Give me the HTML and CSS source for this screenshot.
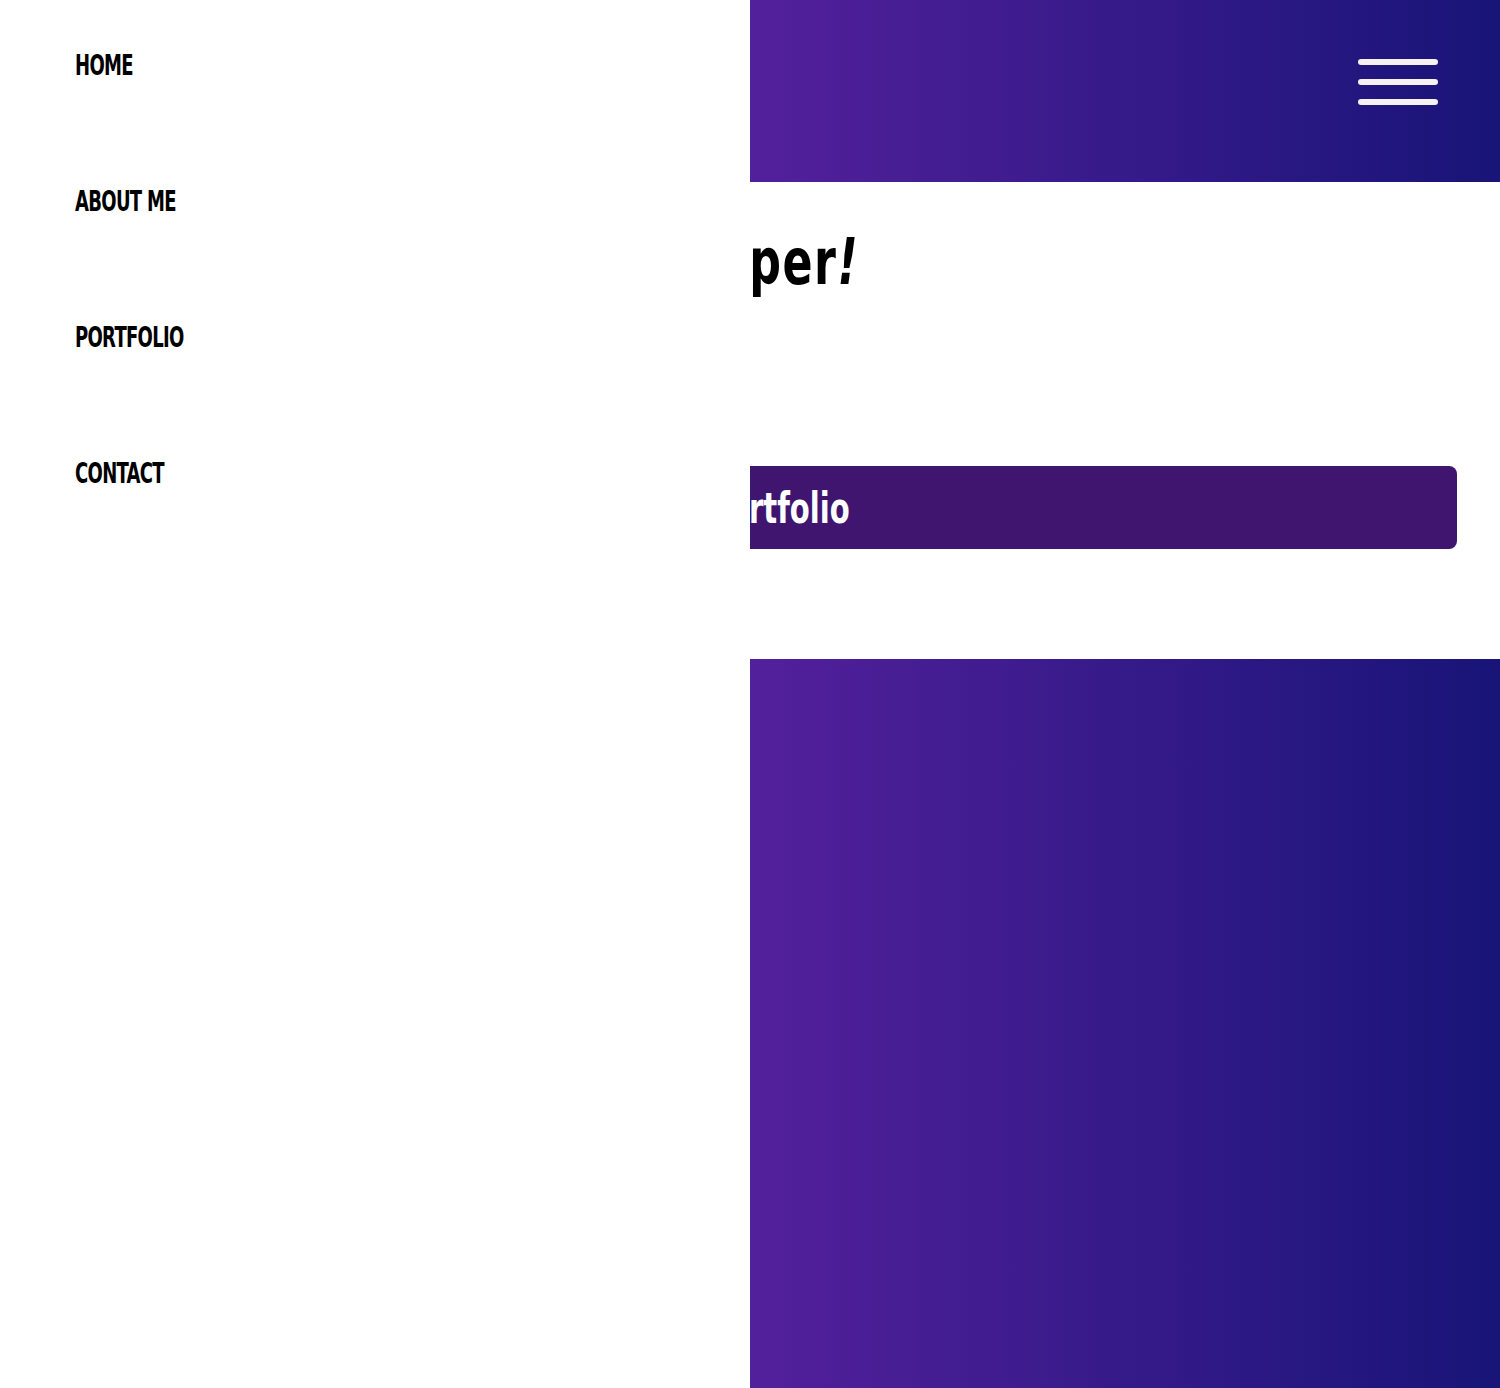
FILE: index.html
```html
<!DOCTYPE html>
<html lang="en">
<head>
<meta charset="utf-8">
<title>Portfolio</title>
<link rel="stylesheet" href="styles.css">
</head>
<body>
<div class="page">
  <header class="topbar">
    <button class="burger" aria-label="Menu">
      <span class="bar"></span><span class="bar"></span><span class="bar"></span>
    </button>
  </header>
  <section class="hero">
    <h1 class="hero-title"><span class="squeeze">Hi, I'm a web develo<span class="tail">per<em class="bang">!</em></span></span></h1>
    <a class="cta" href="#"><span class="squeeze">View my portfolio</span></a>
  </section>
  <section class="band"></section>
</div>
<nav class="menu">
  <a class="menu-link" href="#"><span class="squeeze-nav">HOME</span></a>
  <a class="menu-link" href="#"><span class="squeeze-nav">ABOUT ME</span></a>
  <a class="menu-link" href="#"><span class="squeeze-nav">PORTFOLIO</span></a>
  <a class="menu-link" href="#"><span class="squeeze-nav">CONTACT</span></a>
</nav>
</body>
</html>
```
FILE: styles.css
```css
html, body {
  margin: 0;
  padding: 0;
  height: 100%;
}
body {
  font-family: "DejaVu Sans Condensed", "DejaVu Sans", sans-serif;
  background: #ffffff;
  overflow: hidden;
}
.page {
  width: 1500px;
  min-height: 1388px;
  display: flex;
  flex-direction: column;
}
.topbar {
  height: 182px;
  background: linear-gradient(to right, #7a2bc0 0%, #53209b 50%, #181478 100%);
  display: flex;
  justify-content: flex-end;
  align-items: flex-start;
  padding: 59px 62px 0 0;
  box-sizing: border-box;
}
.burger {
  background: none;
  border: 0;
  padding: 0;
  display: flex;
  flex-direction: column;
  gap: 14px;
  cursor: pointer;
}
.bar {
  display: block;
  width: 80px;
  height: 6px;
  border-radius: 3px;
  background: #f6f2f2;
}
.hero {
  height: 477px;
  box-sizing: border-box;
  padding: 30px 43px 0 43px;
  display: flex;
  flex-direction: column;
}
.hero-title {
  margin: 0;
  padding-left: 200px;
  font-weight: bold;
  font-size: 64px;
  line-height: 100px;
  white-space: nowrap;
  color: #000000;
}
.tail {
  letter-spacing: 2px;
}
.squeeze {
  display: inline-block;
  transform: scaleX(0.77);
  transform-origin: left center;
  white-space: nowrap;
}
.bang {
  font-style: italic;
}
.cta {
  margin-top: 154px;
  height: 83px;
  border-radius: 8px;
  background: #3f1570;
  color: #ffffff;
  text-decoration: none;
  font-weight: bold;
  font-size: 42px;
  line-height: 86px;
  padding-left: 517px;
  white-space: nowrap;
}
.band {
  flex: 1;
  background: linear-gradient(to right, #7a2bc0 0%, #53209b 50%, #181478 100%);
}
.menu {
  position: fixed;
  left: 0;
  top: 0;
  width: 750px;
  height: 100%;
  background: #ffffff;
  display: flex;
  flex-direction: column;
  align-items: flex-start;
  padding: 47px 0 0 75px;
  box-sizing: border-box;
  gap: 100px;
}
.menu-link {
  color: #000000;
  text-decoration: none;
  font-weight: bold;
  font-size: 29px;
  line-height: 36px;
  letter-spacing: -1px;
}
.squeeze-nav {
  display: inline-block;
  transform: scaleX(0.69);
  transform-origin: left center;
  white-space: nowrap;
}
```
